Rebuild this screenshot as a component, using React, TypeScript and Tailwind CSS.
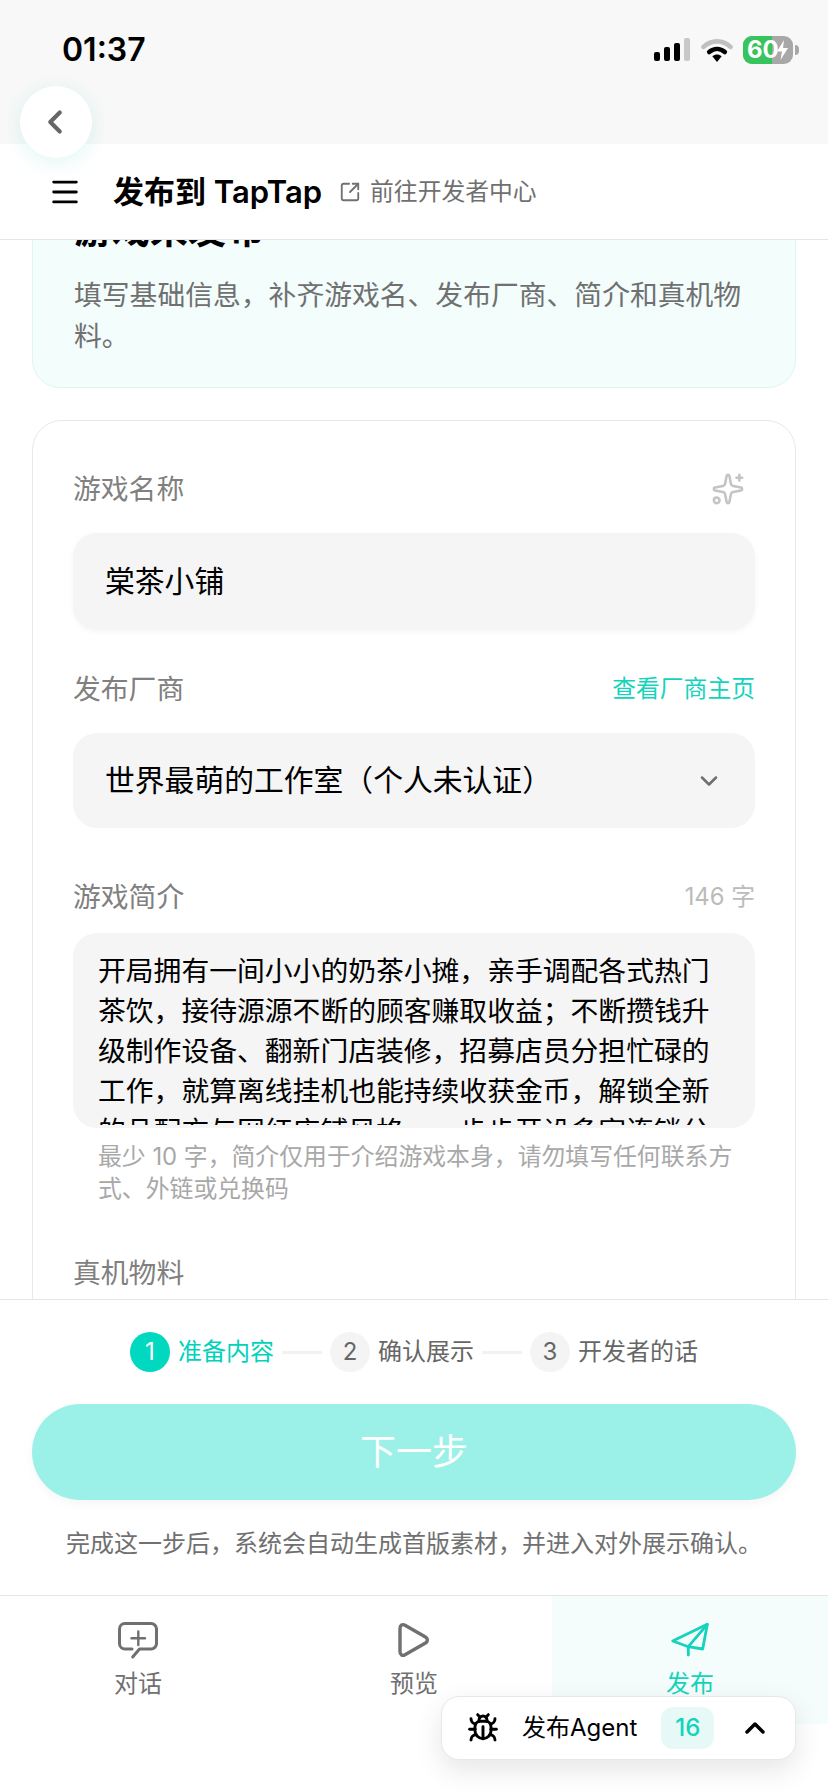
import React from 'react'
import { Bug, ChevronDown, ChevronLeft, ChevronUp, Menu, Sparkles, SquareArrowOutUpRight } from 'lucide-react'

const fontStack = 'font-[Inter,"Noto_Sans_CJK_SC",sans-serif]'

const SignalIcon = () => (
  <svg width="37" height="24" viewBox="0 0 37 24">
    <rect x="0" y="14" width="6" height="9" rx="2" fill="#000" />
    <rect x="10" y="9" width="6" height="14" rx="2" fill="#000" />
    <rect x="20" y="5" width="6" height="18" rx="2" fill="#000" />
    <rect x="30" y="0" width="6" height="23" rx="2" fill="#c8c8c8" />
  </svg>
)

const WifiIcon = () => (
  <svg width="32" height="25" viewBox="0 0 30 24">
    <path d="M2 8.5C9.5 1.5 20.5 1.5 28 8.5" fill="none" stroke="#c0c0c0" strokeWidth="4.4" strokeLinecap="round" />
    <path d="M7.5 13.5C12 9.5 18 9.5 22.5 13.5" fill="none" stroke="#000" strokeWidth="4.4" strokeLinecap="round" />
    <path d="M10.5 17.5C13.5 15.3 16.5 15.3 19.5 17.5L15 23Z" fill="#000" />
  </svg>
)

const Battery = () => (
  <div className="flex items-center">
    <div className="relative flex h-[28px] w-[50px] items-center overflow-hidden rounded-[9px] bg-[#a8a8a8]">
      <div className="h-full w-[29px] bg-[#37c45c]" />
      <span className="absolute left-[4px] top-0 text-[24px] font-bold leading-[28px] text-white">60</span>
      <svg className="absolute right-[3px] top-[3px]" width="15" height="22" viewBox="0 0 15 22">
        <path d="M9 1 2 12.5h5L5.5 21 13 9H8Z" fill="#fff" />
      </svg>
    </div>
    <div className="ml-[2px] h-[10px] w-[4px] rounded-r-full bg-[#a8a8a8]" />
  </div>
)

const ChatIcon = () => (
  <svg width="40" height="40" viewBox="18 14 40 40" fill="none" stroke="#707070" strokeWidth="3" strokeLinecap="round" strokeLinejoin="round">
    <path d="M25 17.5H51A5.5 5.5 0 0 1 56.5 23V37.5A5.5 5.5 0 0 1 51 43H39.5L32.7 51" />
    <path d="M32 43H25A5.5 5.5 0 0 1 19.5 37.5V23A5.5 5.5 0 0 1 25 17.5" />
    <path d="M38.3 25.5V39M31.5 32.3H45" strokeWidth="2.4" />
  </svg>
)

const PlayIcon = () => (
  <svg width="40" height="40" viewBox="16 15 40 40" fill="none" stroke="#707070" strokeWidth="3.4" strokeLinejoin="round">
    <path d="M22 23.5C22 20 24.5 18.8 27 20.3L47.5 32C50 33.5 50 36.5 47.5 38L27 49.8C24.5 51.2 22 50 22 46.5Z" />
  </svg>
)

const SendIcon = () => (
  <svg width="40" height="40" viewBox="20 15 40 40" fill="none" stroke="#14d3bd" strokeWidth="2.8" strokeLinecap="round" strokeLinejoin="round">
    <path d="M57.3 19.3 22.7 36 38.3 41.7 52.7 44Z" />
    <path d="M57.3 19.3 38.3 41.7V50" />
  </svg>
)

const Step = ({ n, label, active }: { n: number; label: string; active?: boolean }) => (
  <div className="flex items-center gap-[8px]">
    <div
      className={
        active
          ? 'flex h-[40px] w-[40px] items-center justify-center rounded-full bg-[#00d8c0] text-[24px] text-white'
          : 'flex h-[40px] w-[40px] items-center justify-center rounded-full bg-[#f4f4f4] text-[24px] text-[#666666]'
      }
    >
      {n}
    </div>
    <span className={active ? 'text-[24px] text-[#00d2bb]' : 'text-[24px] text-[#666666]'}>{label}</span>
  </div>
)

const App: React.FC = () => {
  return (
    <div className={`relative flex h-[1792px] w-[828px] flex-col overflow-hidden bg-white text-black ${fontStack}`}>
      <div className="relative z-10 flex h-[144px] shrink-0 items-start justify-between bg-[#f8f8f8] pl-[62px] pr-[29px] pt-[30px]">
        <span className="text-[32px] font-semibold leading-[40px]">01:37</span>
        <div className="flex items-center gap-[10px] pt-[6px]">
          <SignalIcon />
          <WifiIcon />
          <Battery />
        </div>
      </div>

      <div className="relative z-10 flex h-[96px] shrink-0 items-center border-b border-[#e5e5e5] bg-white pl-[48px]">
        <Menu className="h-[34px] w-[34px] text-black" strokeWidth={2} />
        <h1 className="ml-[31px] text-[31px] font-semibold leading-[40px]">发布到 TapTap</h1>
        <SquareArrowOutUpRight className="ml-[17px] h-[22px] w-[22px] text-[#707070]" strokeWidth={2} />
        <span className="ml-[9px] text-[23.8px] leading-[32px] text-[#707070]">前往开发者中心</span>
      </div>

      <button className="absolute left-[20px] top-[86px] z-20 flex h-[72px] w-[72px] items-center justify-center rounded-full bg-white pr-[2px] shadow-[0_4px_20px_rgba(20,200,180,0.14)]">
        <ChevronLeft className="h-[38px] w-[38px] text-[#666666]" strokeWidth={2.6} />
      </button>

      <main className="min-h-0 flex-1 overflow-hidden px-[32px]">
        <section className="-mt-[70px] rounded-[28px] border border-[#def5f2] bg-[#f2fdfc] px-[41px] pb-[30px] pt-[30px]">
          <h2 className="text-[38px] font-bold leading-[56px]">游戏未发布</h2>
          <p className="mt-[18px] text-[27.8px] leading-[41px] text-[#707070]">填写基础信息，补齐游戏名、发布厂商、简介和真机物料。</p>
        </section>

        <section className="mt-[32px] h-[1000px] rounded-[30px] border border-[#e8e8e8] bg-white px-[40px] pt-[48px]">
          <div className="flex h-[40px] items-center justify-between">
            <span className="pt-[2px] text-[27.8px] text-[#808080]">游戏名称</span>
            <Sparkles className="mr-[10px] h-[34px] w-[34px] text-[#c4c4c4]" strokeWidth={1.8} />
          </div>
          <div className="mt-[24px] flex h-[97px] items-center rounded-[24px] bg-[#f5f5f5] px-[32px] text-[29.8px] shadow-[0_2px_6px_rgba(0,0,0,0.04)]">棠茶小铺</div>

          <div className="mt-[39px] flex h-[40px] items-center justify-between">
            <span className="pt-[2px] text-[27.8px] text-[#808080]">发布厂商</span>
            <span className="text-[23.8px] text-[#14d3bd]">查看厂商主页</span>
          </div>
          <div className="mt-[24px] flex h-[95px] items-center justify-between rounded-[24px] bg-[#f5f5f5] pl-[32px] pr-[32px] text-[29.8px]">
            <span>世界最萌的工作室（个人未认证）</span>
            <ChevronDown className="h-[28px] w-[28px] text-[#707070]" strokeWidth={2.2} />
          </div>

          <div className="mt-[49px] flex h-[40px] items-center justify-between">
            <span className="pt-[2px] text-[27.8px] text-[#808080]">游戏简介</span>
            <span className="text-[23.8px] text-[#bbbbbb]">146 字</span>
          </div>
          <div className="mt-[16px] h-[195px] rounded-[24px] bg-[#f5f5f5] px-[25px] pt-[18px]">
            <p className="h-[174px] overflow-hidden text-[27.8px] leading-[40px]">开局拥有一间小小的奶茶小摊，亲手调配各式热门茶饮，接待源源不断的顾客赚取收益；不断攒钱升级制作设备、翻新门店装修，招募店员分担忙碌的工作，就算离线挂机也能持续收获金币，解锁全新的品配方与网红店铺风格，一步步开设多家连锁分店。</p>
          </div>
          <p className="mt-[13px] pl-[25px] pr-[10px] text-[23.85px] leading-[32px] text-[#a8a8a8]">最少 10 字，简介仅用于介绍游戏本身，请勿填写任何联系方式、外链或兑换码</p>

          <div className="mt-[48px] flex h-[40px] items-center">
            <span className="pt-[2px] text-[27.8px] text-[#808080]">真机物料</span>
          </div>
        </section>
      </main>

      <footer className="shrink-0 border-t border-[#e5e5e5] bg-white px-[32px] pt-[32px]">
        <div className="flex items-center justify-center gap-[8px]">
          <Step n={1} label="准备内容" active />
          <div className="h-[3px] w-[40px] bg-[#f2f2f2]" />
          <Step n={2} label="确认展示" />
          <div className="h-[3px] w-[40px] bg-[#f2f2f2]" />
          <Step n={3} label="开发者的话" />
        </div>
        <button className="mt-[32px] flex h-[96px] w-full items-center justify-center rounded-full bg-[#9bf1e7] text-[36px] text-white shadow-[0_4px_10px_rgba(0,0,0,0.04)]">下一步</button>
        <p className="mt-[28px] h-[67px] text-center text-[24px] leading-[32px] text-[#707070]">完成这一步后，系统会自动生成首版素材，并进入对外展示确认。</p>
      </footer>

      <nav className="grid h-[197px] shrink-0 grid-cols-3 border-t border-[#e5e5e5]">
        <div className="flex h-[128px] flex-col items-center pt-[24px]">
          <ChatIcon />
          <span className="mt-[8px] text-[24px] leading-[32px] text-[#707070]">对话</span>
        </div>
        <div className="flex h-[128px] flex-col items-center pt-[24px]">
          <PlayIcon />
          <span className="mt-[8px] text-[24px] leading-[32px] text-[#707070]">预览</span>
        </div>
        <div className="flex h-[128px] flex-col items-center bg-[#f4fdfb] pt-[24px]">
          <SendIcon />
          <span className="mt-[8px] text-[24px] leading-[32px] text-[#14d3bd]">发布</span>
        </div>
      </nav>

      <div className="absolute left-[441px] top-[1696px] z-20 flex h-[64px] w-[355px] items-center rounded-[18px] border border-[#e8e8e8] bg-white pl-[25px] shadow-[0_10px_28px_rgba(0,0,0,0.10)]">
        <Bug className="h-[32px] w-[32px] text-black" strokeWidth={2.2} />
        <span className="ml-[23px] text-[24px] leading-[32px]">发布Agent</span>
        <span className="ml-[24px] flex h-[42px] w-[53px] items-center justify-center rounded-[12px] bg-[#e6f9f6] text-[24px] font-medium text-[#14d3bd]">16</span>
        <ChevronUp className="ml-[25px] h-[32px] w-[32px] text-black" strokeWidth={2.6} />
      </div>
    </div>
  )
}

export default App
